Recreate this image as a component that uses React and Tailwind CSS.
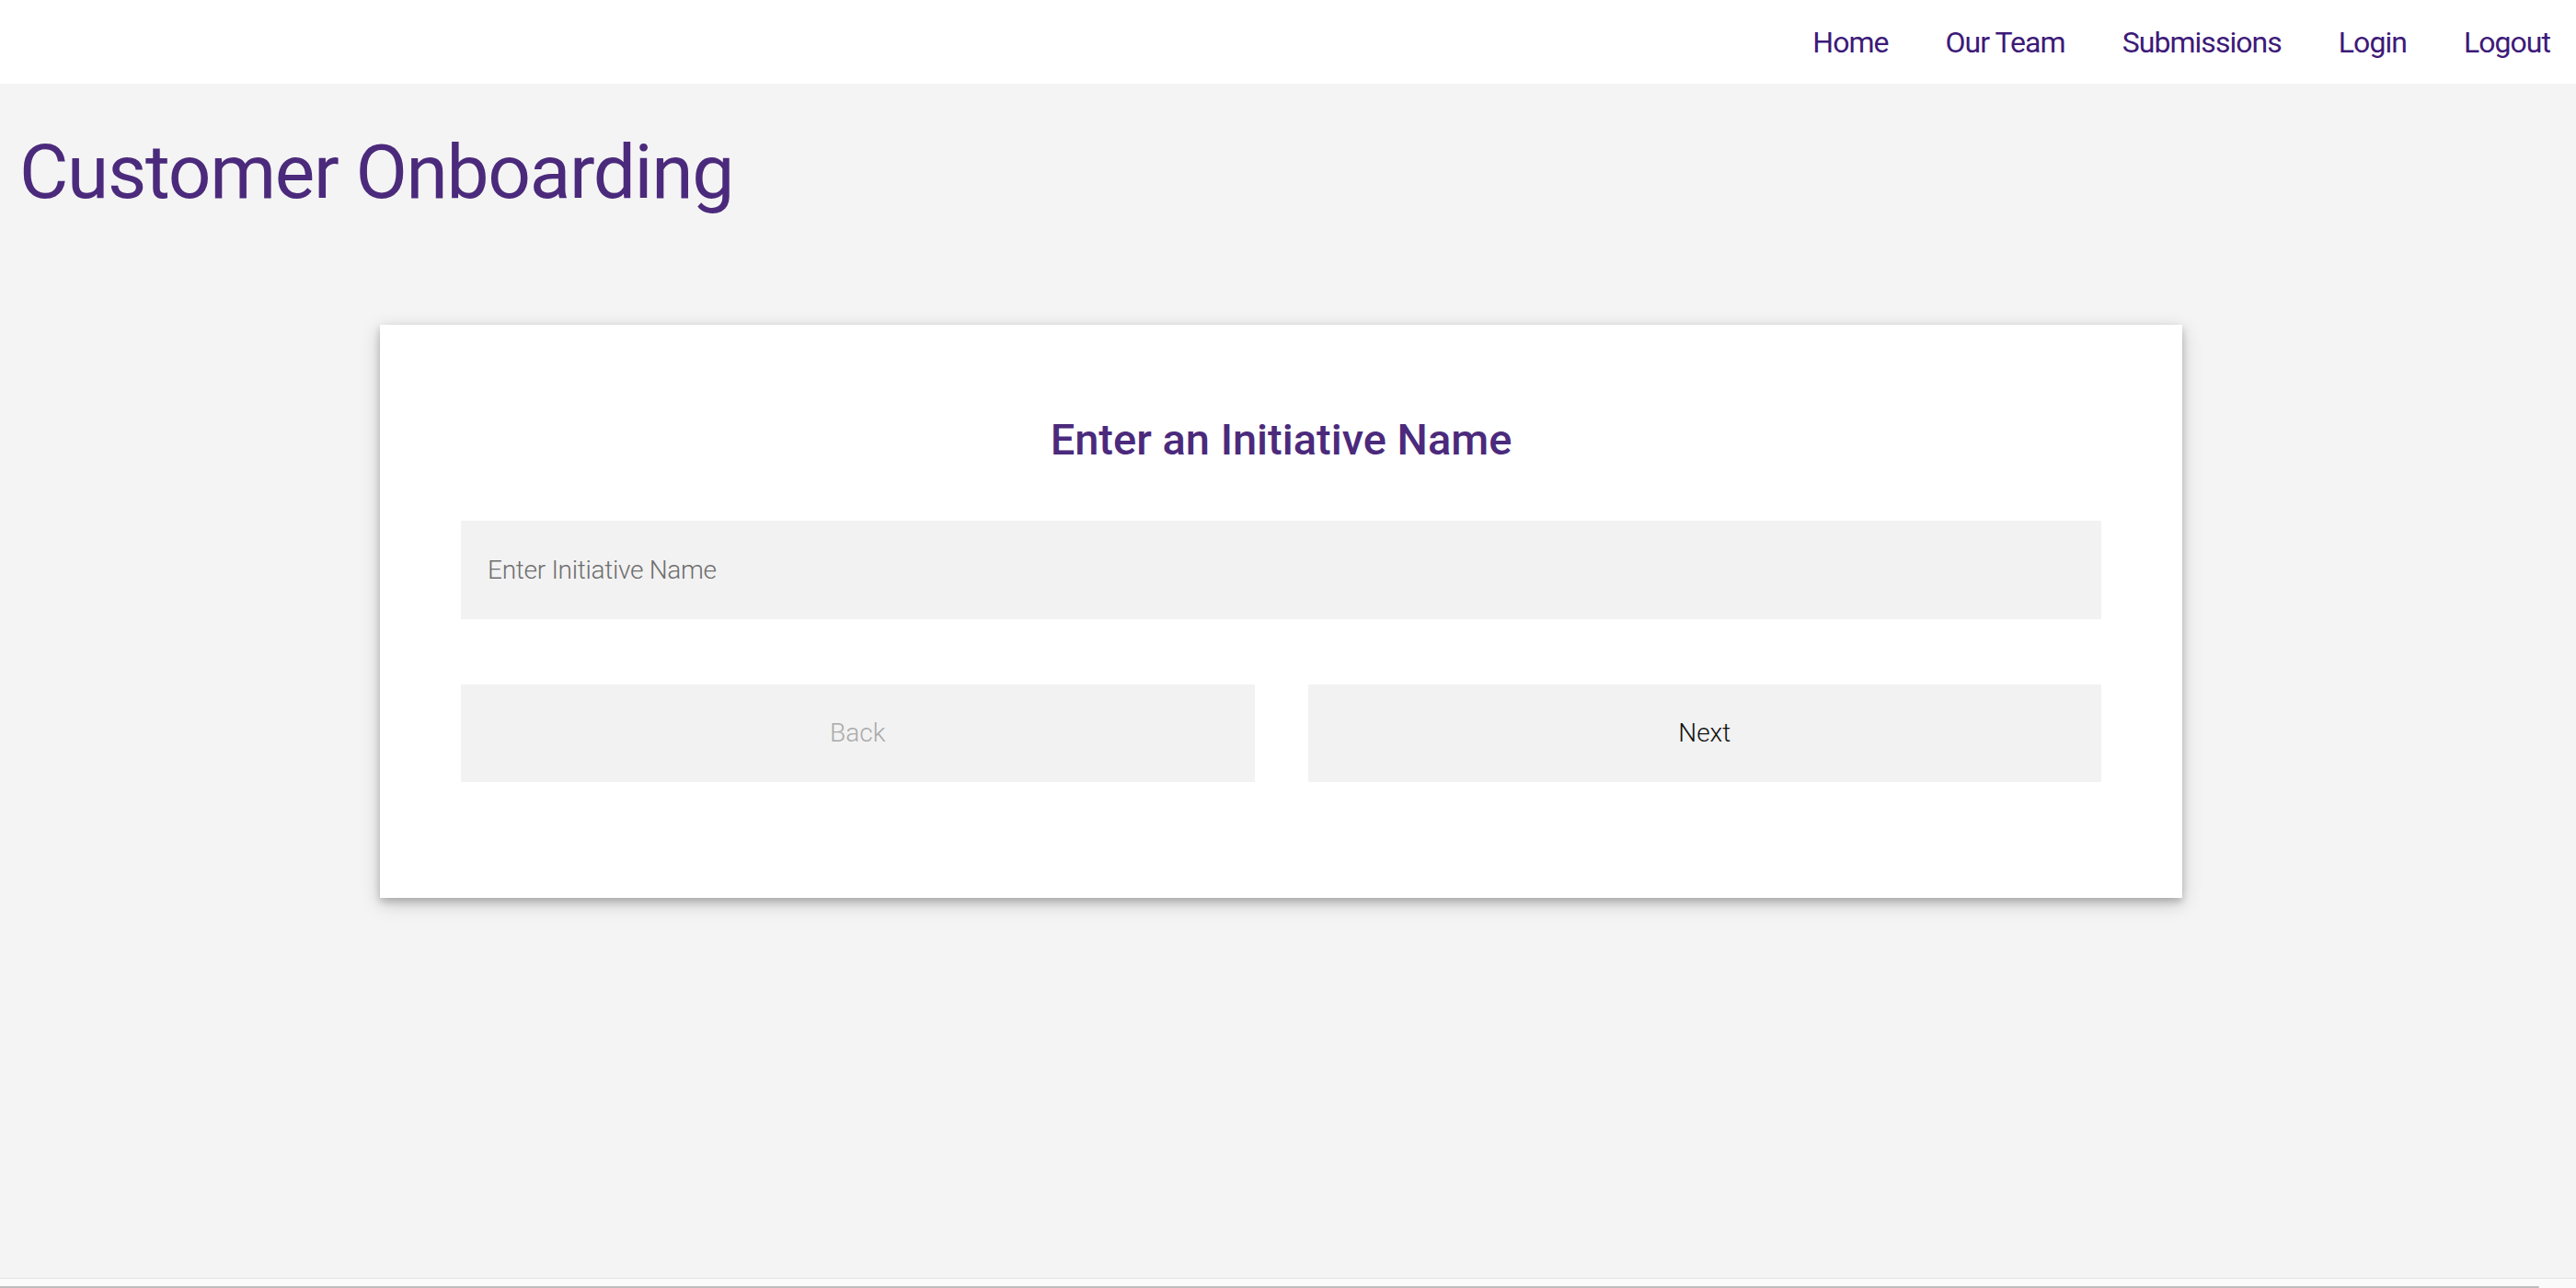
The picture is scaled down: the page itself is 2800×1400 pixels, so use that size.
import { useState } from 'react'

const NAV_LINKS = ['Home', 'Our Team', 'Submissions', 'Login', 'Logout']

export default function App() {
  const [initiative, setInitiative] = useState('')

  return (
    <div className="min-h-screen bg-[#f4f4f4] font-['Roboto',sans-serif]">
      {/* Top Nav */}
      <nav className="h-[91px] bg-white flex items-center justify-end gap-[62px] pr-[28px]">
        {NAV_LINKS.map((link) => (
          <a
            key={link}
            href="#"
            className="text-[32px] leading-none tracking-[-0.03em] text-[#3d1a78]"
          >
            {link}
          </a>
        ))}
      </nav>

      {/* Page title */}
      <h1 className="mt-[55px] pl-[21px] text-[82px] leading-none tracking-[-0.016em] text-[#4b2a7c]">
        Customer Onboarding
      </h1>

      {/* Card */}
      <div className="mt-[125px] ml-[413px] w-[1959px] bg-white px-[88px] pt-[101px] pb-[126px] shadow-[0_4px_8px_0_rgba(0,0,0,0.2),0_6px_20px_0_rgba(0,0,0,0.19)]">
        <h2 className="text-center text-[47px] leading-none font-medium text-[#4b2a7c]">
          Enter an Initiative Name
        </h2>

        <input
          type="text"
          placeholder="Enter Initiative Name"
          value={initiative}
          onChange={(e) => setInitiative(e.target.value)}
          className="mt-[65px] block w-full h-[107px] bg-[#f2f2f2] px-[29px] text-[28px] font-light tracking-[-0.01em] text-[#333] placeholder:text-[#6e6e6e] outline-none"
        />

        <div className="mt-[71px] grid grid-cols-2 gap-[58px]">
          <button
            type="button"
            disabled
            className="h-[106px] bg-[#f2f2f2] text-[28px] font-light text-[#aaaaaa]"
          >
            Back
          </button>
          <button
            type="button"
            className="h-[106px] bg-[#f2f2f2] text-[28px] font-light text-[#111]"
          >
            Next
          </button>
        </div>
      </div>

      {/* horizontal scrollbar strip */}
      <div className="fixed bottom-0 left-0 right-0 h-[11px] bg-[#fafafa] border-t border-[#e3e3e3]">
        <div className="absolute bottom-0 left-0 h-[2px] w-[2760px] rounded-r-full bg-[#bdbdbd]" />
      </div>
    </div>
  )
}
